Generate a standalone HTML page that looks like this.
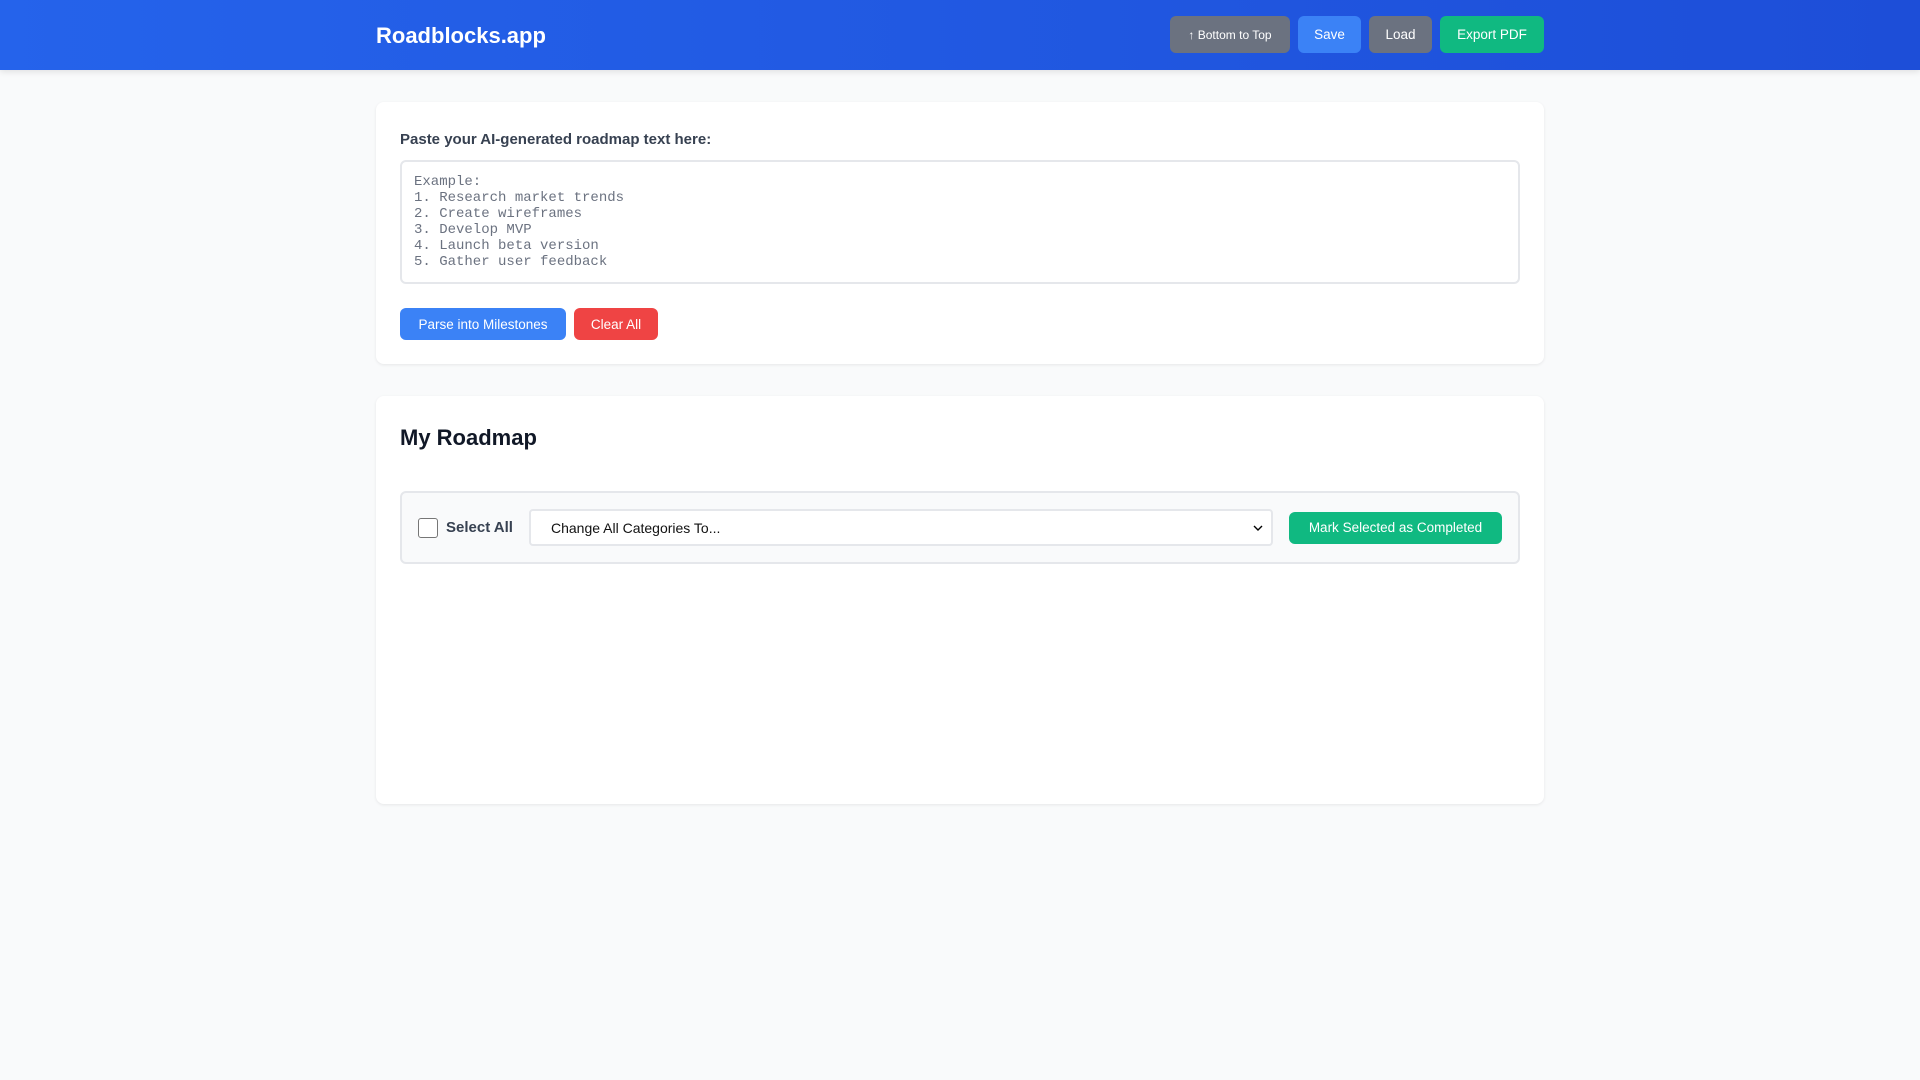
<!DOCTYPE html>
<html><head><meta charset="utf-8"><style>
*{box-sizing:border-box;margin:0;padding:0}
body{width:1920px;height:1080px;background:#f9fafb;font-family:"Liberation Sans",sans-serif;overflow:hidden}
header{height:70px;background:linear-gradient(90deg,#2563eb,#1d4ed8);box-shadow:0 2px 6px rgba(0,0,0,.1)}
.wrap{width:1168px;margin:0 auto;position:relative}
header .wrap{height:70px;display:flex;align-items:center;justify-content:space-between}
h1{color:#fff;font-size:22px;font-weight:bold;margin-top:1px}
.hb{display:flex;gap:8px;margin-top:-1px}
.btn{border:none;border-radius:6px;color:#fff;font-family:inherit;font-size:13.5px;display:flex;align-items:center;justify-content:center;white-space:nowrap}
.hb .btn{height:37px;padding:0 16px}
.gray{background:#6b7280}.blue{background:#3b82f6}.green{background:#10b981}.red{background:#ef4444}
.card{background:#fff;border-radius:8px;box-shadow:0 1px 3px rgba(0,0,0,.08);padding:24px}
.c1{margin-top:32px;height:262px}
label{display:block;font-weight:bold;font-size:15px;color:#374151;margin-top:5px;margin-bottom:12px}
.ta{height:124px;border:2px solid #e5e7eb;border-radius:6px;padding:12px;font-family:"Liberation Mono",monospace;font-size:14px;line-height:16px;color:#6b7280;white-space:pre}
.row{display:flex;gap:8px;margin-top:24px}
.row .btn{height:32px;padding:0 16px}
.c2{margin-top:32px;height:408px}
h2{font-size:22px;font-weight:bold;color:#111827;margin-top:5px;height:28px}
.tool{margin-top:38px;height:73px;background:#f9fafb;border:2px solid #e5e7eb;border-radius:6px;display:flex;align-items:center;padding:0 16px}
.cb{width:20px;height:20px;border:1.5px solid #767676;border-radius:3px;background:#fff;flex:none}
.sa{font-weight:bold;font-size:15px;color:#374151;margin-left:8px;margin-right:16px;white-space:nowrap}
.sel{width:744px;height:37px;border:2px solid #e5e7eb;border-radius:4px;background:#fff;display:flex;align-items:center;justify-content:space-between;padding:0 8px 0 20px;font-size:14px;color:#111;flex:none}
.mk{margin-left:16px;height:32px;width:213px}
</style></head><body>
<header><div class="wrap"><h1>Roadblocks.app</h1>
<div class="hb"><div class="btn gray" style="font-size:12px;width:120px;padding:0">↑ Bottom to Top</div><div class="btn blue" style="width:63px;padding:0">Save</div><div class="btn gray" style="width:63px;padding:0">Load</div><div class="btn green" style="width:104px;padding:0">Export PDF</div></div></div></header>
<div class="wrap">
<div class="card c1"><label>Paste your AI-generated roadmap text here:</label>
<div class="ta">Example:
1. Research market trends
2. Create wireframes
3. Develop MVP
4. Launch beta version
5. Gather user feedback</div>
<div class="row"><div class="btn blue" style="width:166px;padding:0">Parse into Milestones</div><div class="btn red" style="width:84px;padding:0">Clear All</div></div></div>
<div class="card c2"><h2>My Roadmap</h2>
<div class="tool"><div class="cb"></div><span class="sa">Select All</span>
<div class="sel"><span>Change All Categories To...</span><svg width="10" height="8" viewBox="0 0 10 8"><path d="M1 2l4 4 4-4" stroke="#000" stroke-width="1.4" fill="none"/></svg></div>
<div class="btn green mk">Mark Selected as Completed</div></div></div>
</div>
</body></html>
